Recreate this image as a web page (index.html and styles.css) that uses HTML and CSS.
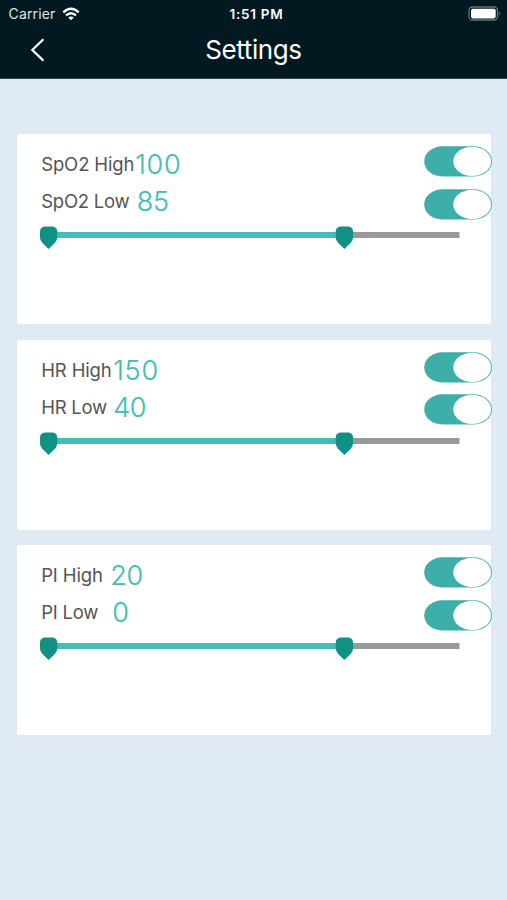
FILE: index.html
```
<!DOCTYPE html>
<html lang="en">
<head>
<meta charset="utf-8">
<title>Settings</title>
<link rel="stylesheet" href="styles.css">
</head>
<body>
<header class="header">
  <div class="status">
    <div class="carrier"><span>Carrier</span>
      <svg class="wifi" width="18" height="14" viewBox="0 0 18 14" fill="none" stroke="#fff" stroke-width="2.4"><path d="M1.3 5.3Q9-1.8 16.7 5.3M4 8.4Q9 4 14 8.4"/><path d="M6.2 10.5Q9 8.3 11.8 10.5L9 13.2Z" fill="#fff" stroke="none"/></svg>
    </div>
    <div class="time">1:51 PM</div>
    <svg class="battery" width="34" height="16" viewBox="0 0 34 16"><rect x="1" y="1" width="28.5" height="13" rx="3.5" fill="none" stroke="#64747b" stroke-width="1.3"/><rect x="3" y="2.8" width="24.7" height="9.6" rx="1.8" fill="#fff"/><path d="M31 5.2Q33 7.5 31 9.8Z" fill="#64747b"/></svg>
  </div>
  <div class="nav">
    <svg class="back" width="16" height="24" viewBox="0 0 16 24" fill="none" stroke="#fff" stroke-width="2.2"><path d="M13.4 1.2 2.3 12 13.4 22.6"/></svg>
    <h1>Settings</h1>
  </div>
</header>
<main class="cards">
  <section class="card spo2">
    <div class="limits">
      <div class="rows">
        <div class="row"><span class="label">SpO2 High</span><span class="value wide">100</span></div>
        <div class="row low"><span class="label">SpO2 Low</span><span class="value">85</span></div>
      </div>
      <div class="toggles">
        <svg class="toggle" viewBox="0 0 68 31"><rect x=".2" y=".3" width="67.8" height="30.2" rx="18" ry="15.1"/><ellipse cx="48.2" cy="15.4" rx="19" ry="14.6"/></svg>
        <svg class="toggle" viewBox="0 0 68 31"><rect x=".2" y=".3" width="67.8" height="30.2" rx="18" ry="15.1"/><ellipse cx="48.2" cy="15.4" rx="19" ry="14.6"/></svg>
      </div>
    </div>
    <svg class="slider" width="422" height="26" viewBox="0 0 422 26"><path d="M9 9H304" stroke="#43bdb5" stroke-width="6"/><path d="M304 9H419.5" stroke="#999" stroke-width="6"/><path class="thumb" d="M4.2.5H13.2Q17.2 1.8 17.2 5.2V11.5Q17.2 14.5 15 16.8L8.6 23 2.2 16.8Q0 14.5 0 11.5V5.2Q0 1.8 4.2.5Z"/><path class="thumb" transform="translate(295.8)" d="M4.2.5H13.2Q17.2 1.8 17.2 5.2V11.5Q17.2 14.5 15 16.8L8.6 23 2.2 16.8Q0 14.5 0 11.5V5.2Q0 1.8 4.2.5Z"/></svg>
  </section>
  <section class="card hr">
    <div class="limits">
      <div class="rows">
        <div class="row"><span class="label">HR High</span><span class="value wide">150</span></div>
        <div class="row low"><span class="label">HR Low</span><span class="value">40</span></div>
      </div>
      <div class="toggles">
        <svg class="toggle" viewBox="0 0 68 31"><rect x=".2" y=".3" width="67.8" height="30.2" rx="18" ry="15.1"/><ellipse cx="48.2" cy="15.4" rx="19" ry="14.6"/></svg>
        <svg class="toggle" viewBox="0 0 68 31"><rect x=".2" y=".3" width="67.8" height="30.2" rx="18" ry="15.1"/><ellipse cx="48.2" cy="15.4" rx="19" ry="14.6"/></svg>
      </div>
    </div>
    <svg class="slider" width="422" height="26" viewBox="0 0 422 26"><path d="M9 9H304" stroke="#43bdb5" stroke-width="6"/><path d="M304 9H419.5" stroke="#999" stroke-width="6"/><path class="thumb" d="M4.2.5H13.2Q17.2 1.8 17.2 5.2V11.5Q17.2 14.5 15 16.8L8.6 23 2.2 16.8Q0 14.5 0 11.5V5.2Q0 1.8 4.2.5Z"/><path class="thumb" transform="translate(295.8)" d="M4.2.5H13.2Q17.2 1.8 17.2 5.2V11.5Q17.2 14.5 15 16.8L8.6 23 2.2 16.8Q0 14.5 0 11.5V5.2Q0 1.8 4.2.5Z"/></svg>
  </section>
  <section class="card pi">
    <div class="limits">
      <div class="rows">
        <div class="row"><span class="label">PI High</span><span class="value">20</span></div>
        <div class="row low"><span class="label">PI Low</span><span class="value">0</span></div>
      </div>
      <div class="toggles">
        <svg class="toggle" viewBox="0 0 68 31"><rect x=".2" y=".3" width="67.8" height="30.2" rx="18" ry="15.1"/><ellipse cx="48.2" cy="15.4" rx="19" ry="14.6"/></svg>
        <svg class="toggle" viewBox="0 0 68 31"><rect x=".2" y=".3" width="67.8" height="30.2" rx="18" ry="15.1"/><ellipse cx="48.2" cy="15.4" rx="19" ry="14.6"/></svg>
      </div>
    </div>
    <svg class="slider" width="422" height="26" viewBox="0 0 422 26"><path d="M9 9H304" stroke="#43bdb5" stroke-width="6"/><path d="M304 9H419.5" stroke="#999" stroke-width="6"/><path class="thumb" d="M4.2.5H13.2Q17.2 1.8 17.2 5.2V11.5Q17.2 14.5 15 16.8L8.6 23 2.2 16.8Q0 14.5 0 11.5V5.2Q0 1.8 4.2.5Z"/><path class="thumb" transform="translate(295.8)" d="M4.2.5H13.2Q17.2 1.8 17.2 5.2V11.5Q17.2 14.5 15 16.8L8.6 23 2.2 16.8Q0 14.5 0 11.5V5.2Q0 1.8 4.2.5Z"/></svg>
  </section>
</main>
</body>
</html>
```
FILE: styles.css
```
* { box-sizing: border-box; }
body { margin: 0; min-height: 900px; background: #e0eaf5; font-family: Inter, "Liberation Sans", sans-serif; }
.header { height: 79px; background: #021922; color: #fff; border-bottom: 1px solid #34474f; }
.status { height: 28px; display: grid; grid-template-columns: 1fr 80px 1fr; align-items: center; padding: 0 5px 0 8.5px; }
.carrier { display: flex; align-items: center; gap: 6.5px; font-size: 14px; color: #dfe5e8; letter-spacing: 0.15px; margin-top: -2px; }
.wifi { margin-top: 1px; }
.time { text-align: center; font-size: 13.5px; font-weight: 600; letter-spacing: 0.75px; white-space: nowrap; padding-left: 2.5px; }
.battery { justify-self: end; margin-top: -1px; }
.nav { height: 44px; display: grid; grid-template-columns: 50px 1fr 50px; align-items: center; }
.back { margin-left: 30px; }
h1 { margin: -2px 0 0; text-align: center; font-size: 26px; font-weight: 400; letter-spacing: -0.4px; }
.cards { padding: 55px 16px 0 16.5px; display: flex; flex-direction: column; gap: 15.7px; }
.card { height: 190px; background: #fff; border-radius: 2px; padding: 12px 0 0 24px; }
.limits { display: flex; justify-content: space-between; height: 80px; }
.row { display: flex; align-items: center; height: 37px; white-space: nowrap; }
.label { font-size: 18.5px; color: #555; letter-spacing: -0.13px; margin: -1px 0 0 0.7px; }
.low .label { letter-spacing: -0.25px; }
.value { font-size: 27px; font-weight: 300; color: #42bdb3; letter-spacing: -0.3px; -webkit-text-stroke: 0.2px #42bdb3; }
.value.wide { letter-spacing: 0.8px; }
.spo2 .label { width: 94px; margin-top: -2px; }
.hr .label { width: 72px; }
.pi .label { width: 69px; }
.spo2 .low .value { margin-left: 1.5px; }
.pi .low .value { margin-left: 2px; }
.toggles { display: flex; flex-direction: column; gap: 11.7px; margin-right: -0.8px; }
.toggle { display: block; width: 68px; height: 31px; }
.toggle rect { fill: #3dafa8; }
.toggle ellipse { fill: #fff; }
.slider { display: block; margin-left: -0.8px; }
.thumb { fill: #109184; }
```
